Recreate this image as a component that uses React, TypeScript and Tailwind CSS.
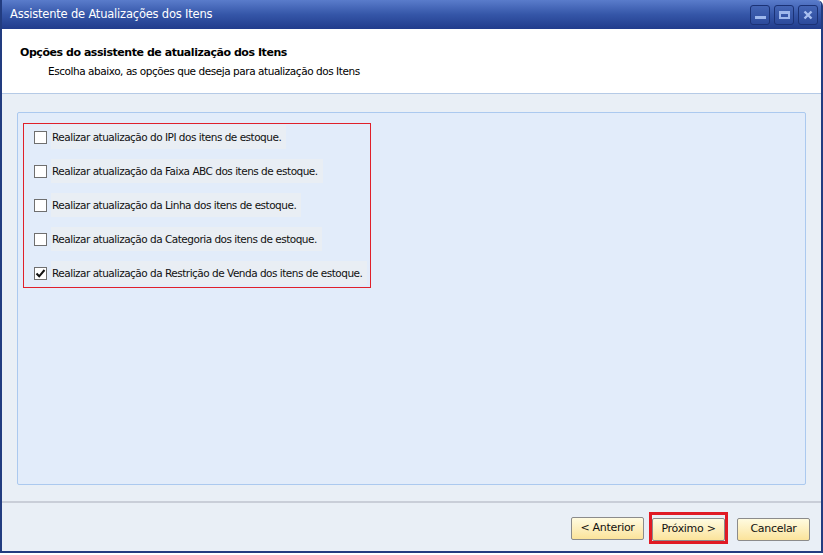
const options = [
  { label: "Realizar atualização do IPI dos itens de estoque.", checked: false },
  { label: "Realizar atualização da Faixa ABC dos itens de estoque.", checked: false },
  { label: "Realizar atualização da Linha dos itens de estoque.", checked: false },
  { label: "Realizar atualização da Categoria dos itens de estoque.", checked: false },
  { label: "Realizar atualização da Restrição de Venda dos itens de estoque.", checked: true },
];

const WinButton = ({ kind }: { kind: "min" | "max" | "close" }) => (
  <div className="w-[20px] h-[20px] rounded-[3px] border border-[#1b3275] bg-gradient-to-b from-[#4465b5] to-[#2c4a9c] flex items-center justify-center">
    {kind === "min" && <div className="w-[11px] h-[3px] bg-[#9fb8ec] mt-[5px]" />}
    {kind === "max" && <div className="w-[11px] h-[8px] border-2 border-t-[3px] border-[#9fb8ec]" />}
    {kind === "close" && (
      <svg width="10" height="10" viewBox="0 0 10 10">
        <path d="M1.5 1.5 L8.5 8.5 M8.5 1.5 L1.5 8.5" stroke="#a9c0f0" strokeWidth="2.4" />
      </svg>
    )}
  </div>
);

const Checkbox = ({ checked }: { checked: boolean }) => (
  <div className="w-[13px] h-[13px] border border-[#6f6f6f] bg-white flex items-center justify-center shrink-0">
    {checked && (
      <svg width="11" height="11" viewBox="0 0 11 11">
        <path d="M1.5 5.5 L4.2 8.3 L9.5 2" stroke="#111" strokeWidth="2" fill="none" />
      </svg>
    )}
  </div>
);

const WizButton = ({ children }: { children: string }) => (
  <button className="w-[73px] h-[23px] border border-[#8b8b8b] rounded-[2px] bg-gradient-to-b from-[#fffbe0] to-[#fbe39a] text-[11px] tracking-[-0.3px] text-[#111] whitespace-nowrap">
    {children}
  </button>
);

export default function App() {
  return (
    <div className="w-[823px] h-[555px] bg-white font-['DejaVu_Sans',sans-serif]">
      <div className="h-[553px] flex flex-col border-x-2 border-b-2 border-[#223c80] rounded-tr-[6px] overflow-hidden bg-[#e9eff6]">
        <div className="h-[29px] shrink-0 flex items-center justify-between pl-[8px] pr-[3px] bg-gradient-to-b from-[#5a7ccb] via-[#3556a8] to-[#213c8c]">
          <span className="text-white text-[11.5px] tracking-[-0.2px]">Assistente de Atualizações dos Itens</span>
          <div className="flex gap-[4px]">
            <WinButton kind="min" />
            <WinButton kind="max" />
            <WinButton kind="close" />
          </div>
        </div>
        <div className="h-[65px] shrink-0 bg-white border-b border-[#b5cae6] pl-[18px] pt-[16px]">
          <div className="text-[11px] font-bold text-black tracking-[-0.45px] whitespace-nowrap">
            Opções do assistente de atualização dos Itens
          </div>
          <div className="text-[10.5px] text-black pl-[28px] mt-[2px] tracking-[-0.45px] whitespace-nowrap">
            Escolha abaixo, as opções que deseja para atualização dos Itens
          </div>
        </div>
        <div className="flex-1 pt-[18px] px-[15px] pb-[16px]">
          <div className="h-full border border-[#abc9ef] rounded-[2px] bg-[#e2ecfa] pt-[10px] pl-[5px]">
            <div className="w-[348px] border border-[#e0202a] pt-[1px] pb-[2px] flex flex-col gap-[10px]">
              {options.map((o) => (
                <div key={o.label} className="flex items-center h-[24px] pl-[10px]">
                  <Checkbox checked={o.checked} />
                  <span className="ml-[4px] px-[1px] bg-[#e9eef4] text-[10.5px] leading-[24px] pr-[5px] text-[#111] tracking-[-0.5px] whitespace-nowrap">
                    {o.label}
                  </span>
                </div>
              ))}
            </div>
          </div>
        </div>
        <div className="h-[50px] shrink-0 border-t-2 border-[#c9ced8] flex items-center justify-end pr-[11px] pt-[2px]">
          <WizButton>{"< Anterior"}</WizButton>
          <div className="ml-[5px] border-[3px] border-[#e01a24]">
            <WizButton>{"Próximo >"}</WizButton>
          </div>
          <div className="ml-[9px]">
            <WizButton>Cancelar</WizButton>
          </div>
        </div>
      </div>
    </div>
  );
}
